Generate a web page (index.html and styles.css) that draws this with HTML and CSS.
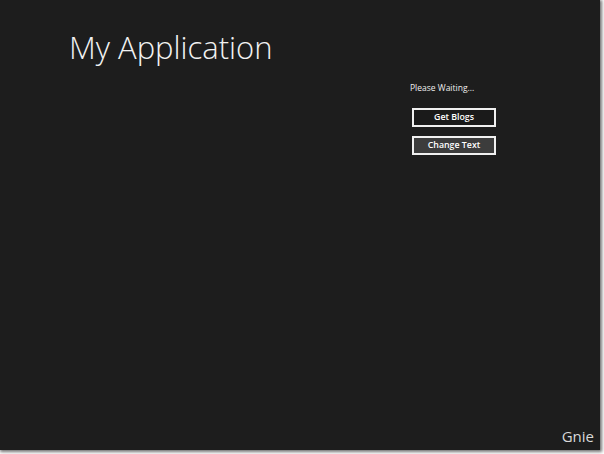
FILE: index.html
```html
<!DOCTYPE html>
<html>
<head>
<meta charset="utf-8">
<link rel="stylesheet" href="styles.css">
</head>
<body>
<div class="screen">
  <h1 class="title">My Application</h1>
  <div class="panel">
    <div class="status">Please Waiting...</div>
    <button class="btn">Get Blogs</button>
    <button class="btn btn-hover">Change Text</button>
  </div>
  <div class="spacer"></div>
  <div class="footer">Gnie</div>
</div>
</body>
</html>
```

FILE: styles.css
```css
html, body {
  margin: 0;
  padding: 0;
  background: #ffffff;
  width: 604px;
  height: 454px;
  overflow: hidden;
}
.screen {
  width: 600px;
  height: 450px;
  background: #1d1d1d;
  box-shadow: 1px 1px 3px 1px rgba(0,0,0,0.55);
  display: flex;
  flex-direction: column;
  font-family: "Open Sans", "Liberation Sans", sans-serif;
  color: #ffffff;
  position: relative;
}
.title {
  margin: 27px 0 0 69px;
  font-weight: 300;
  font-size: 31px;
  line-height: 40px;
  color: #f2f2f2;
  letter-spacing: 0;
}
.panel {
  margin: 15px 0 0 410px;
  display: flex;
  flex-direction: column;
  align-items: flex-start;
}
.status {
  font-size: 8.5px;
  line-height: 12px;
  color: #eeeeee;
}
.btn {
  margin: 14px 0 0 2px;
  width: 84px;
  height: 19px;
  border: 2px solid #f0f0f0;
  background: #1a1a1a;
  color: #ffffff;
  font-family: "Open Sans", "Liberation Sans", sans-serif;
  font-weight: 600;
  font-size: 8.8px;
  padding: 0;
  line-height: 15px;
}
.btn + .btn { margin-top: 9px; }
.btn-hover { background: #3c3c3c; }
.spacer { flex: 1; }
.footer {
  align-self: flex-end;
  margin: 0 6px 4px 0;
  font-size: 15px;
  line-height: 20px;
  color: #d8d8d8;
}
```
